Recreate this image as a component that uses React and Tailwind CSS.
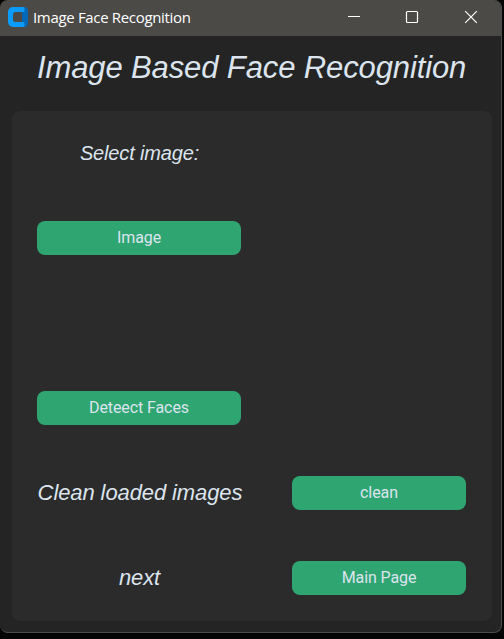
function TitleBar() {
  return (
    <header className="flex h-9 shrink-0 items-center bg-[#4b4a47] pl-2">
      <svg width="20" height="20" viewBox="0 0 20 20" className="-mt-0.5 shrink-0">
        <path d="M14 1l2-1a4 4 0 0 1 4 4v12a4 4 0 0 1-4 4l-2-1z" fill="#0468b8" />
        <path
          d="M5 0h10a1.500 1.500 0 0 1 1.500 1.500v2A1.500 1.500 0 0 1 15 5H7.500A2.500 2.500 0 0 0 5 7.500v5A2.500 2.500 0 0 0 7.500 15H15a1.500 1.500 0 0 1 1.500 1.500v2A1.500 1.500 0 0 1 15 20H5a5 5 0 0 1-5-5V5a5 5 0 0 1 5-5z"
          fill="#0a9bfd"
        />
      </svg>
      <span className="-mt-0.5 ml-[5px] whitespace-nowrap font-['Open_Sans','Noto_Sans',sans-serif] text-[15px] leading-9 tracking-[-0.33px] text-white">
        Image Face Recognition
      </span>
      <svg width="132" height="36" viewBox="0 0 132 36" className="ml-auto mr-[22px] shrink-0" fill="none" stroke="#fff" strokeWidth="1.2">
        <path d="M1 16.500h12" strokeWidth="1" />
        <rect x="59.500" y="11.500" width="11" height="11" rx="1" />
        <path d="M118.200 11.200l11.600 11.600M129.800 11.200l-11.600 11.600" />
      </svg>
    </header>
  );
}

function Button({ children }) {
  return (
    <button className="mb-px block h-[34px] w-full rounded-lg bg-[#2fa572] pb-px font-[Roboto,sans-serif] text-base tracking-[-0.1px] text-[#dce4ee]">
      {children}
    </button>
  );
}

export default function App() {
  return (
    <div className="h-[639px] w-[504px] overflow-hidden bg-[#050505] font-['Liberation_Sans',Arial,sans-serif] text-[#dce4ee]">
      <main className="flex h-[633px] w-[502px] flex-col overflow-hidden rounded-lg border-r border-b border-[#4b4b4b] bg-[#242424]">
        <TitleBar />
        <h1 className="flex h-[75px] shrink-0 items-center whitespace-nowrap pb-3 pl-[37px] text-[31px] italic leading-none tracking-[-0.12px]">
          Image Based Face Recognition
        </h1>
        <section className="ml-3 grid h-[510px] w-[480px] shrink-0 grid-cols-[255px_225px] grid-rows-[repeat(6,85px)] items-center rounded-lg bg-[#2b2b2b]">
          <p className="pb-px text-center text-[20px] italic leading-6 tracking-[-0.15px]">Select image:</p>
          <div />
          <div className="pl-[25px] pr-[26px]"><Button>Image</Button></div>
          <div />
          <div className="col-span-2" />
          <div className="pl-[25px] pr-[26px]"><Button>Deteect Faces</Button></div>
          <div />
          <p className="whitespace-nowrap pb-0.5 pl-px text-center text-[22px] italic leading-7 tracking-[-0.1px]">Clean loaded images</p>
          <div className="pl-[25px] pr-[26px]"><Button>clean</Button></div>
          <p className="pb-0.5 text-center text-[22px] italic leading-7 tracking-[-0.1px]">next</p>
          <div className="pl-[25px] pr-[26px]"><Button>Main Page</Button></div>
        </section>
      </main>
    </div>
  );
}
